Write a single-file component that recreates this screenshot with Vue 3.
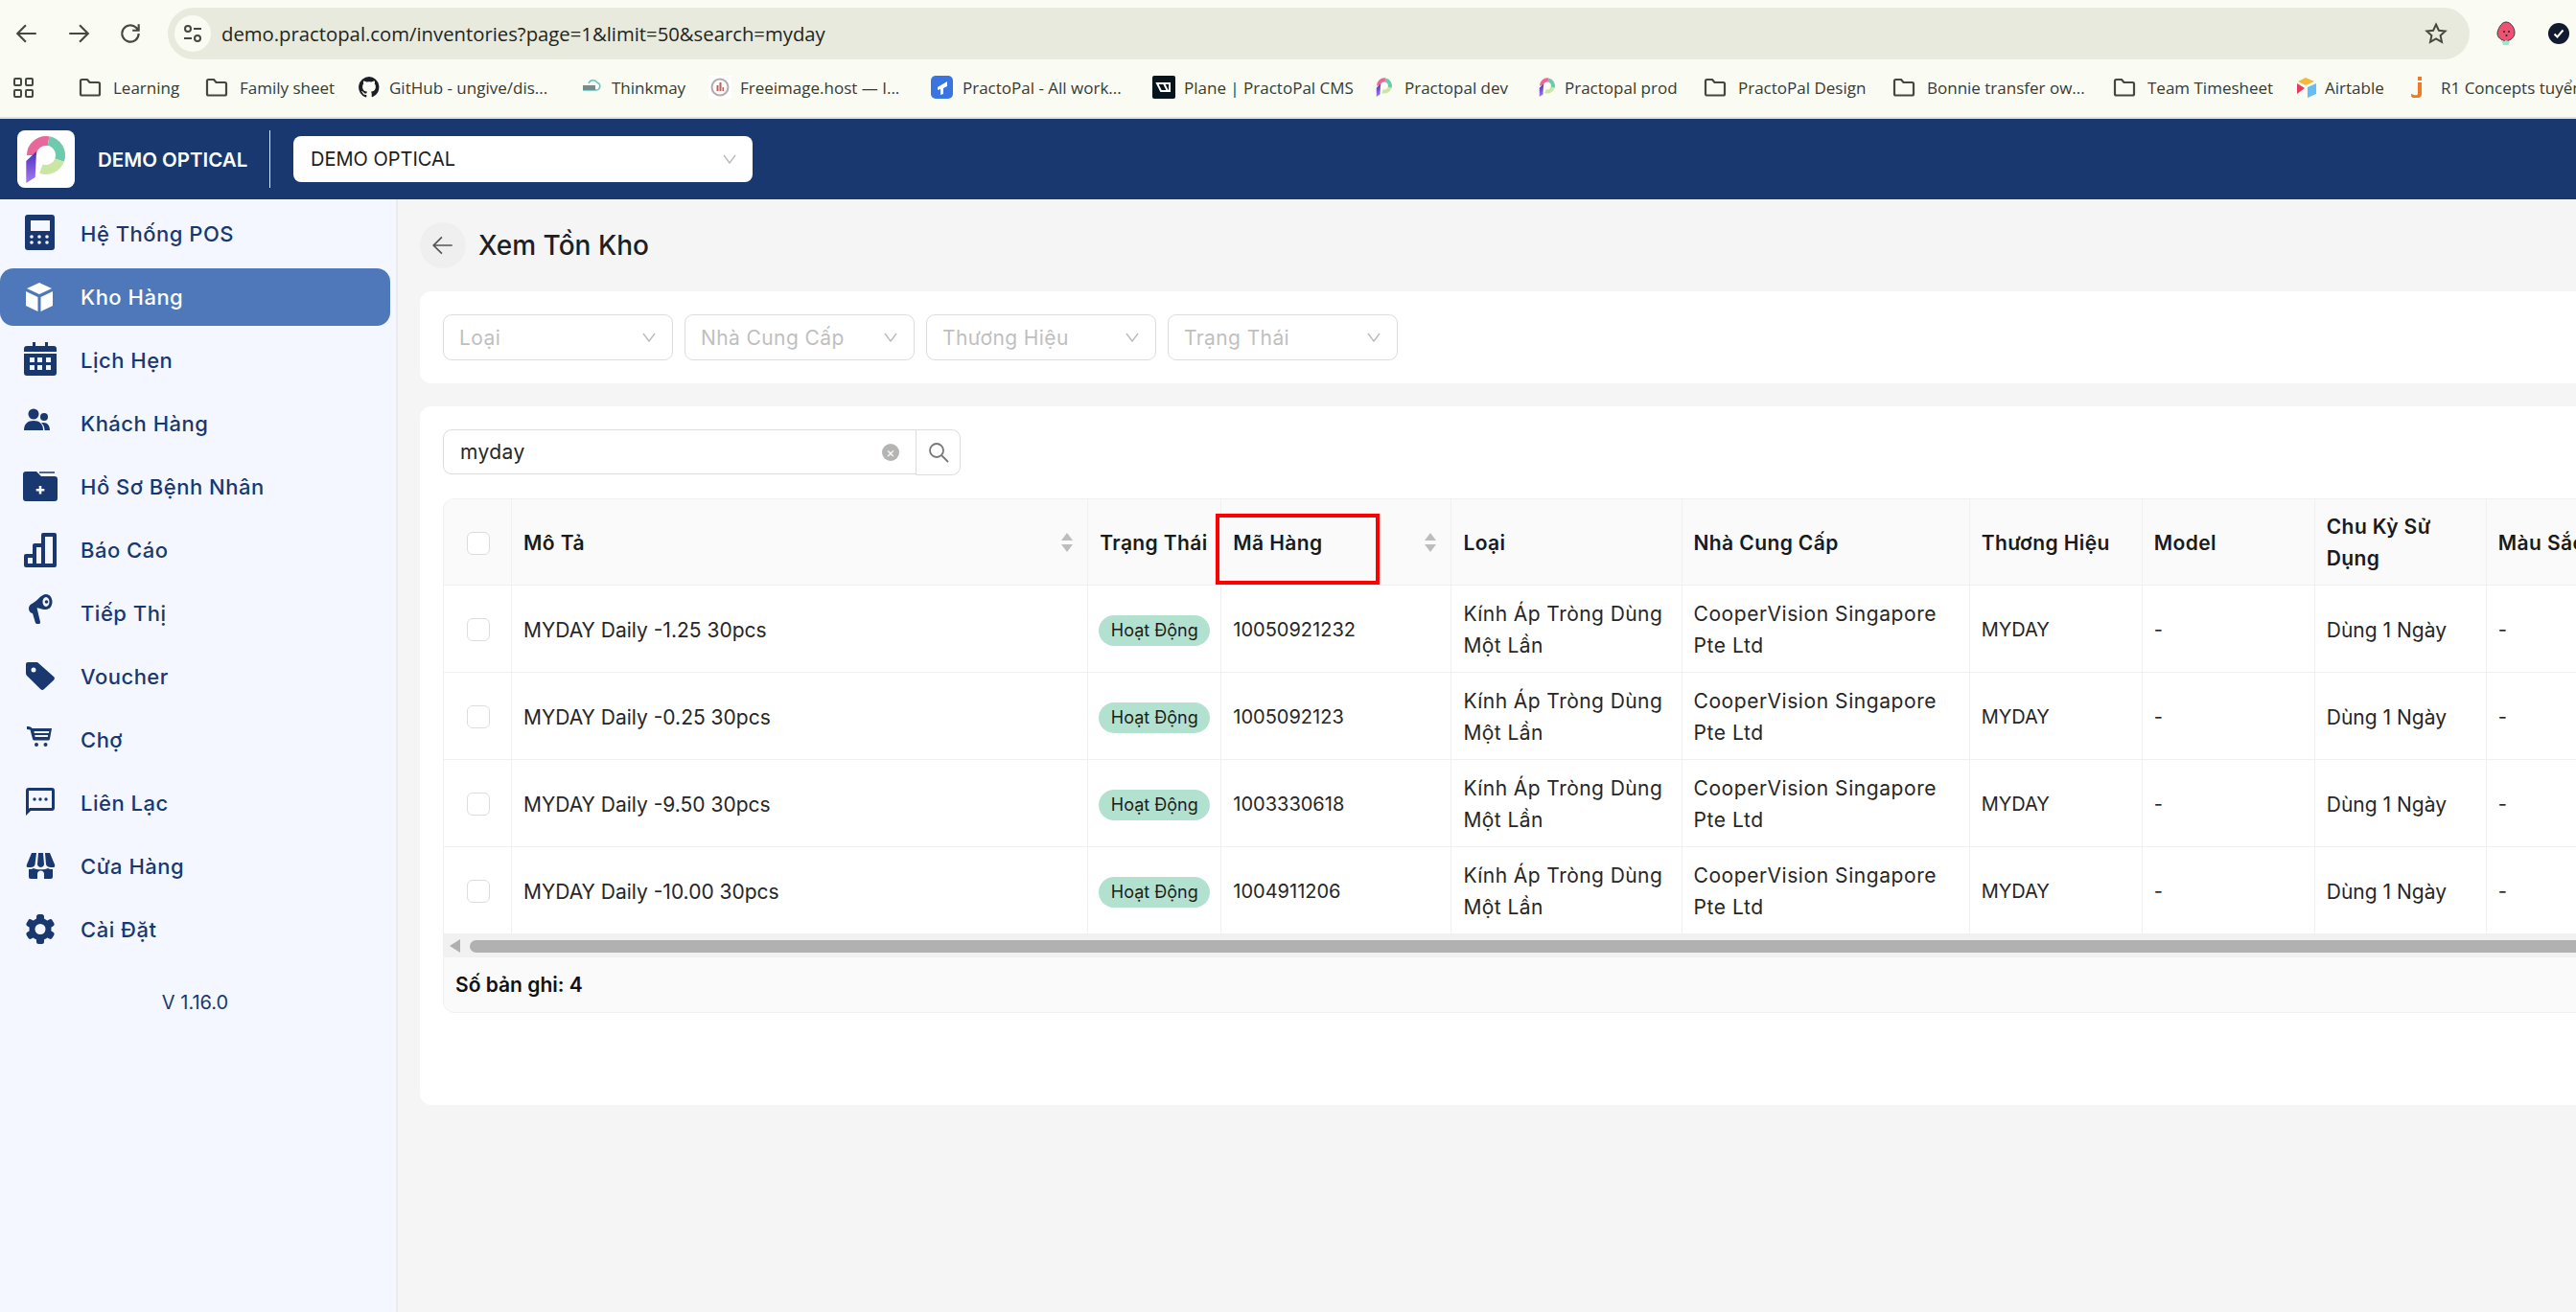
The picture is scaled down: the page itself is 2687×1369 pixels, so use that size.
<script setup>
const pLogo = `<path d="M15 26A15 15 0 0 1 32.6 11.2" fill="none" stroke="#e8689c" stroke-width="10"/>
<path d="M32.6 11.2A15 15 0 0 1 44.1 31.1" fill="none" stroke="#6fc9ad" stroke-width="10"/>
<path d="M44.1 31.1A15 15 0 0 1 24.9 40.1" fill="none" stroke="#c9e6a4" stroke-width="10"/>
<path d="M9.3 55 18.7 49 20 22 9.3 32Z" fill="url(#pstem)"/>
<defs><linearGradient id="pstem" x1="0" y1="0" x2="0" y2="1"><stop offset="0" stop-color="#4a2fc0"/><stop offset="1" stop-color="#a77bf0"/></linearGradient></defs>`

const folder = `<path d="M2 5.5A1.5 1.5 0 0 1 3.5 4H9l2.5 3h9A1.5 1.5 0 0 1 22 8.500V19a1.500 1.500 0 0 1-1.500 1.500h-17A1.500 1.500 0 0 1 2 19Z" fill="none" stroke="#45483f" stroke-width="2.200"/>`

const bookmarks = [
  { label: 'Learning', w: 68, gap: 12, icon: folder },
  { label: 'Family sheet', w: 95, gap: 12, icon: folder },
  { label: 'GitHub - ungive/dis...', w: 171, gap: 9, icon: `<path fill="#1b1f23" fill-rule="evenodd" d="M12 1a11 11 0 0 0-3.500 21.400c.6.1.8-.2.8-.5v-2c-3.100.7-3.700-1.400-3.700-1.400-.5-1.300-1.200-1.600-1.200-1.600-1-.7.1-.7.1-.7 1.100.1 1.700 1.100 1.700 1.100 1 1.700 2.600 1.200 3.200.9.1-.7.4-1.200.7-1.500-2.400-.3-5-1.200-5-5.400 0-1.200.4-2.200 1.100-2.900-.1-.3-.5-1.400.1-2.900 0 0 .9-.3 3 1.100a10.500 10.500 0 0 1 5.400 0c2.100-1.400 3-1.100 3-1.100.6 1.500.2 2.600.1 2.900.7.7 1.100 1.700 1.100 2.900 0 4.200-2.600 5.100-5 5.400.4.300.8 1 .8 2v3c0 .3.2.6.8.5A11 11 0 0 0 12 1Z"/>` },
  { label: 'Thinkmay', w: 73, gap: 9, icon: `<path d="M3 15h14a4 4 0 0 0 1-7.800A5 5 0 0 0 9 8" fill="none" stroke="#63c4c0" stroke-width="1.500"/><rect x="3" y="10" width="13" height="5" fill="#7a8a8a"/>` },
  { label: 'Freeimage.host — I...', w: 170, gap: 9, icon: `<rect width="24" height="24" fill="#fff"/><circle cx="12" cy="12" r="8.500" fill="none" stroke="#b9a8a8" stroke-width="2"/><path d="M8.500 16V10h2v6Zm3 0V7h2v9Zm3 0v-4h1.500v4Z" fill="#c0605c"/>` },
  { label: 'PractoPal - All work...', w: 170, gap: 10, icon: `<rect x="1" width="23" height="24" rx="5" fill="#3a74e0"/><path d="M8 12 18 6v5l-4 2v6l-3 1v-6l-3 1Z" fill="#fff"/>` },
  { label: 'Plane | PractoPal CMS', w: 169, gap: 9, icon: `<rect width="24" height="24" rx="2" fill="#07141c"/><path d="M5 8h7l4 8H9Zm7 0h6v8h-2" fill="none" stroke="#fff" stroke-width="2"/>` },
  { label: 'Practopal dev', w: 109, gap: 9, icon: `<svg x="0" y="0" width="24" height="24" viewBox="0 0 60 60">${pLogo}</svg>` },
  { label: 'Practopal prod', w: 117, gap: 6, icon: `<svg x="0" y="0" width="24" height="24" viewBox="0 0 60 60">${pLogo}</svg>` },
  { label: 'PractoPal Design', w: 133, gap: 12, icon: folder },
  { label: 'Bonnie transfer ow...', w: 166, gap: 12, icon: folder },
  { label: 'Team Timesheet', w: 126, gap: 12, icon: folder },
  { label: 'Airtable', w: 62, gap: 7, icon: `<path d="M11 2 20 6l-9 4-8-4Z" fill="#f4b93a"/><path d="M13 12l9-4v11l-9 4Z" fill="#66bdf5"/><path d="M2 8l8 5-8 6Z" fill="#e8395f"/>` },
  { label: 'R1 Concepts tuyển dụng', w: 240, gap: 7, icon: `<path d="M7 1h4v4H7Zm0 6h4v12a4 4 0 0 1-4 4H2a3 3 0 0 1-2-4l3 1c1 .5 4 .5 4-1Z" fill="#ee7a27"/>` },
]

const navItems = [
  { label: 'Hệ Thống POS', icon: `<path fill-rule="evenodd" d="M8 0h25a3 3 0 0 1 3 3v31a3 3 0 0 1-3 3H8a3 3 0 0 1-3-3V3a3 3 0 0 1 3-3Zm3 6v11h20V6Z"/><g fill="#f4f7ff"><circle cx="12" cy="23" r="1.800"/><circle cx="20" cy="23" r="1.800"/><circle cx="28" cy="23" r="1.800"/><circle cx="12" cy="29" r="1.800"/><circle cx="20" cy="29" r="1.800"/><circle cx="28" cy="29" r="1.800"/></g>` },
  { label: 'Kho Hàng', active: true, icon: `<path d="M20 5 33 11 20 17 7 11ZM6 14l12.500 6v15L6 29Zm28 0-12.500 6v15L34 29Z" fill="#fff"/>` },
  { label: 'Lịch Hẹn', icon: `<path fill-rule="evenodd" d="M13 1h3v4h10V1h3v4h6a3 3 0 0 1 3 3v3H4V8a3 3 0 0 1 3-3h6ZM4 13h34v20a3 3 0 0 1-3 3H7a3 3 0 0 1-3-3Zm6 4v5h5v-5Zm8 0v5h5v-5Zm9 0v5h5v-5Zm-17 8v5h5v-5Zm8 0v5h5v-5Zm9 0v5h5v-5Z"/>` },
  { label: 'Khách Hàng', icon: `<circle cx="14" cy="10" r="5.500"/><path d="M4 27c0-7 4-10 10-10s10 3 10 10Z"/><circle cx="25" cy="13" r="4"/><path d="M25.500 27H31c0-5-2.500-8-6.500-8a9 9 0 0 0-2.500.3c2.400 1.900 3.500 4.500 3.500 7.700Z"/>` },
  { label: 'Hồ Sơ Bệnh Nhân', icon: `<path fill-rule="evenodd" d="M6 4h11l5 5h14a3 3 0 0 1 3 3v20a3 3 0 0 1-3 3H6a3 3 0 0 1-3-3V7a3 3 0 0 1 3-3Zm13.700 15v3h-3v2.500h3v3h2.600v-3h3V22h-3v-3Z"/><path d="M20 5h16" stroke="#1a3870" stroke-width="1.500"/>` },
  { label: 'Báo Cáo', icon: `<path d="M6 36V26h9V15h9V4h12v32Zm9 0V26m9 10V15" fill="none" stroke="#1a3870" stroke-width="4" stroke-linejoin="round"/>` },
  { label: 'Tiếp Thị', icon: `<path fill-rule="evenodd" d="M27 0c3.700 0 6.500 3.600 6.500 8S30.700 16 27 16c-3 0-6-1-9.500-1.800L21 29c.2 1-.4 2-1.500 2h-2c-.8 0-1.400-.5-1.600-1.200L13 20c-2.500-.5-4-2.300-4-5 0-2.500 1.400-4.300 4-5.500C18 7 22 0 27 0Zm0 3c-1.900 0-3.500 2.200-3.500 5s1.600 5 3.500 5 3.500-2.200 3.500-5-1.600-5-3.500-5Z"/><circle cx="27.500" cy="8" r="1.800"/>` },
  { label: 'Voucher', icon: `<path fill-rule="evenodd" d="M8 5h10l17 15c1.200 1.100 1.200 2.500 0 3.700L25 33c-1.200 1.200-2.600 1.200-3.800 0L7 19c-.7-.7-1-1.500-1-2.500V7a2 2 0 0 1 2-2Zm6 5.500a2.500 2.500 0 1 0 0 5 2.500 2.500 0 0 0 0-5Z"/>` },
  { label: 'Chợ', icon: `<path fill-rule="evenodd" d="M7 6c3 0 4.500.5 5.500 2H33l-2 11c-.2 1-1 1.500-2 1.500H15c-1 0-1.800-.5-2-1.500L10.500 9.500 7 9Zm7.500 5 .3 2H30l.3-2Zm.8 4 .3 2h13.200l.3-2Z"/><circle cx="17" cy="25" r="2"/><circle cx="26.500" cy="25" r="2"/>` },
  { label: 'Liên Lạc', icon: `<path fill-rule="evenodd" d="M9 4h24a3 3 0 0 1 3 3v18a3 3 0 0 1-3 3H11l-5 5V7a3 3 0 0 1 3-3Zm0 3v19l1-1h23V7Z"/><circle cx="15" cy="16" r="1.700"/><circle cx="21" cy="16" r="1.700"/><circle cx="27" cy="16" r="1.700"/>` },
  { label: 'Cửa Hàng', icon: `<path d="M12 6h5l-1.500 12c-.3 2-2 3-4.500 3H8c-1.500 0-1.500-1.500-1-3Zm7 0h5l1 12c0 2-2.500 3-3.500 3s-3.500-1-3.500-3Zm7 0h5l5 12c.5 1.500 0 3-1 3h-3c-2.500 0-4.500-1-5-3Z"/><path fill-rule="evenodd" d="M9 23c2 0 3.500 0 5-1 2 1 3.500 1.200 7.500 1.200s5.500-.2 7.500-1.200c1.500 1 3 1 5 1v8a2 2 0 0 1-2 2H11a2 2 0 0 1-2-2Zm9 10h7v-5c0-2-1.500-3.500-3.500-3.500S18 26 18 28Z"/>` },
  { label: 'Cài Đặt', icon: `<g><rect x="17" y="4" width="8" height="31" rx="2.500"/><rect x="17" y="4" width="8" height="31" rx="2.500" transform="rotate(60 21 19.500)"/><rect x="17" y="4" width="8" height="31" rx="2.500" transform="rotate(120 21 19.500)"/></g><circle cx="21" cy="19.500" r="11.500"/><circle cx="21" cy="19.500" r="5.500" fill="#f4f7ff"/>` },
]

const filters = ['Loại', 'Nhà Cung Cấp', 'Thương Hiệu', 'Trạng Thái']

const columns = [
  { key: 'desc', label: 'Mô Tả', width: 601, sort: true },
  { key: 'status', label: 'Trạng Thái', width: 139 },
  { key: 'code', label: 'Mã Hàng', width: 240, sort: true },
  { key: 'type', label: 'Loại', width: 240 },
  { key: 'supplier', label: 'Nhà Cung Cấp', width: 300 },
  { key: 'brand', label: 'Thương Hiệu', width: 180 },
  { key: 'model', label: 'Model', width: 180 },
  { key: 'cycle', label: 'Chu Kỳ Sử\nDụng', width: 179 },
  { key: 'color', label: 'Màu Sắc', width: 200 },
]

const rows = [
  ['MYDAY Daily -1.25 30pcs', '10050921232'],
  ['MYDAY Daily -0.25 30pcs', '1005092123'],
  ['MYDAY Daily -9.50 30pcs', '1003330618'],
  ['MYDAY Daily -10.00 30pcs', '1004911206'],
].map(([desc, code]) => ({
  desc,
  code,
  status: 'Hoạt Động',
  type: 'Kính Áp Tròng Dùng\nMột Lần',
  supplier: 'CooperVision Singapore\nPte Ltd',
  brand: 'MYDAY',
  model: '-',
  cycle: 'Dùng 1 Ngày',
  color: '-',
}))
</script>

<template>
  <div class="page">
    <header class="browser">
      <div class="toolbar">
        <svg class="tb-icon" viewBox="0 0 24 24"><path d="M21 12H4m7-8-8 8 8 8" /></svg>
        <svg class="tb-icon" viewBox="0 0 24 24"><path d="M3 12h17m-7-8 8 8-8 8" /></svg>
        <svg class="tb-icon" viewBox="0 0 24 24"><path d="M20 12a8 8 0 1 1-2.500-5.800L20 9m0-6v6h-6" /></svg>
        <div class="urlbar">
          <span class="site-btn">
            <svg viewBox="0 0 24 24" width="24" height="24" fill="none" stroke="#45483f" stroke-width="2">
              <circle cx="7" cy="7" r="3" /><path d="M13 7h8M3 17h8" /><circle cx="17" cy="17" r="3" />
            </svg>
          </span>
          <span class="url">demo.practopal.com/inventories?page=1&amp;limit=50&amp;search=myday</span>
          <svg class="star" viewBox="0 0 24 24" width="24" height="24">
            <path d="m12 2.500 2.900 6.200 6.700.8-5 4.600 1.400 6.700-6-3.400-6 3.400 1.400-6.700-5-4.600 6.700-.8Z" />
          </svg>
        </div>
        <svg class="ext berry" viewBox="0 0 22 26" width="22" height="26">
          <path d="M11 1c5 0 9 6 9 11s-4 8-9 9C6 20 2 17 2 13S6 1 11 1Z" fill="#ee5272" stroke="#3a3a3a" stroke-width="1" />
          <path d="M6 20l3 1 2-1 3 1 1 1-2 3H8Z" fill="#a5e4cc" />
          <circle cx="9" cy="11" r="1" fill="#3a1a20" /><circle cx="14" cy="11" r="1" fill="#3a1a20" /><circle cx="11.500" cy="15" r="1" fill="#3a1a20" />
        </svg>
        <svg class="ext check" viewBox="0 0 22 22" width="22" height="22">
          <circle cx="11" cy="11" r="11" fill="#111a2e" />
          <path d="m6.500 11.500 3 3 6-7" fill="none" stroke="#fff" stroke-width="2" />
        </svg>
      </div>
      <nav class="bookmarks">
        <span class="apps"><i v-for="n in 4" :key="n"></i></span>
        <span class="bm-sep"></span>
        <span v-for="b in bookmarks" :key="b.label" class="bm" :style="{ gap: b.gap + 'px' }">
          <svg class="bm-icon" viewBox="0 0 24 24" v-html="b.icon"></svg>
          <span class="bm-label" :style="{ width: b.w + 'px' }">{{ b.label }}</span>
        </span>
      </nav>
    </header>

    <div class="appbar">
      <span class="logo"><svg viewBox="0 0 60 60" width="60" height="60" v-html="pLogo"></svg></span>
      <span class="store-name">DEMO OPTICAL</span>
      <span class="appbar-sep"></span>
      <div class="store-select">
        <span>DEMO OPTICAL</span>
        <svg class="chev" viewBox="0 0 14 10"><path d="M1 1l6 8 6-8" /></svg>
      </div>
    </div>

    <div class="layout">
      <aside class="sidebar">
        <a v-for="item in navItems" :key="item.label" class="nav-item" :class="{ active: item.active }">
          <svg class="nav-icon" viewBox="0 0 40 40" v-html="item.icon"></svg>
          <span>{{ item.label }}</span>
        </a>
        <div class="version">V 1.16.0</div>
      </aside>

      <main class="content">
        <div class="title-row">
          <span class="back">
            <svg viewBox="0 0 24 24" width="26" height="26"><path d="M21 12H4m7-8-8 8 8 8" /></svg>
          </span>
          <h1>Xem Tồn Kho</h1>
        </div>

        <section class="card filters">
          <div v-for="f in filters" :key="f" class="filter">
            <span>{{ f }}</span>
            <svg class="chev" viewBox="0 0 14 10"><path d="M1 1l6 8 6-8" /></svg>
          </div>
        </section>

        <section class="card list">
          <div class="search">
            <div class="search-input">
              <span>myday</span>
              <span class="clear">×</span>
            </div>
            <button class="search-btn">
              <svg viewBox="0 0 24 24" width="24" height="24"><circle cx="10" cy="10" r="7" /><path d="m15 15 7 7" /></svg>
            </button>
          </div>

          <div class="table-wrap">
            <table>
              <colgroup>
                <col class="col-check" />
                <col v-for="c in columns" :key="c.key" :style="{ width: c.width + 'px' }" />
              </colgroup>
              <thead>
                <tr>
                  <th class="check-cell"><span class="checkbox"></span></th>
                  <th v-for="c in columns" :key="c.key">
                    <div class="th-inner">
                      <span class="th-label">{{ c.label }}</span>
                      <svg v-if="c.sort" class="sort" viewBox="0 0 14 20" width="14" height="20">
                        <path d="M7 0l6 8H1Z" /><path d="M7 20l6-8H1Z" />
                      </svg>
                    </div>
                  </th>
                </tr>
              </thead>
              <tbody>
                <tr v-for="row in rows" :key="row.code">
                  <td class="check-cell"><span class="checkbox"></span></td>
                  <td v-for="c in columns" :key="c.key">
                    <span v-if="c.key === 'status'" class="badge">{{ row.status }}</span>
                    <span v-else class="cell" :class="'cell-' + c.key">{{ row[c.key] }}</span>
                  </td>
                </tr>
              </tbody>
            </table>
            <div class="scrollbar">
              <span class="arrow"></span>
              <span class="thumb"></span>
            </div>
            <div class="table-footer">Số bản ghi: 4</div>
            <div class="highlight"></div>
          </div>
        </section>
      </main>
    </div>
  </div>
</template>

<style>
html, body {
  margin: 0;
  overflow: hidden;
}
</style>

<style scoped>
.page {
  width: 2687px;
  height: 1369px;
  overflow: hidden;
  display: flex;
  flex-direction: column;
  font-family: Inter, "Noto Sans", sans-serif;
  color: #262626;
  background: #f5f5f5;
}

/* browser chrome */
.browser {
  flex: none;
  height: 122px;
  background: #fafbf2;
  border-bottom: 2px solid #dfe0da;
  font-family: "Open Sans", "Noto Sans", sans-serif;
}

.toolbar {
  height: 70px;
  display: flex;
  align-items: center;
  padding: 0 0 0 15px;
}

.tb-icon {
  width: 26px;
  height: 26px;
  margin-right: 28px;
  fill: none;
  stroke: #45483f;
  stroke-width: 2;
}

.tb-icon:nth-child(3) {
  margin-right: 26px;
}

.urlbar {
  width: 2401px;
  height: 54px;
  border-radius: 27px;
  background: #e7eadc;
  display: flex;
  align-items: center;
  padding-left: 7px;
  box-sizing: border-box;
}

.site-btn {
  width: 38px;
  height: 38px;
  border-radius: 50%;
  background: #fafbf2;
  display: flex;
  align-items: center;
  justify-content: center;
}

.url {
  margin-left: 11px;
  font-size: 20.300px;
  color: #21251d;
  white-space: nowrap;
}

.star {
  margin-left: auto;
  margin-right: 23px;
  fill: none;
  stroke: #45483f;
  stroke-width: 2;
}

.berry {
  margin-left: 27px;
}

.check {
  margin-left: 33px;
}

.bookmarks {
  height: 42px;
  display: flex;
  align-items: center;
  padding-left: 14px;
  gap: 28px;
  overflow: hidden;
}

.apps {
  width: 20px;
  display: grid;
  grid-template-columns: 9px 9px;
  gap: 3px;
  margin-right: -5px;
}

.apps i {
  height: 9px;
  box-sizing: border-box;
  border: 2px solid #45483f;
  border-radius: 2px;
}

.bm-sep {
  width: 2px;
  height: 24px;
  background: #c7e8a8;
  margin-right: -3px;
}

.bm {
  display: flex;
  align-items: center;
  flex: none;
}

.bm-icon {
  width: 24px;
  height: 24px;
  flex: none;
}

.bm-label {
  font-size: 17px;
  color: #363a32;
  white-space: nowrap;
}

/* app header */
.appbar {
  flex: none;
  height: 84px;
  background: #1a3870;
  display: flex;
  align-items: center;
  padding-left: 18px;
}

.logo {
  width: 60px;
  height: 60px;
  border-radius: 8px;
  background: #fff;
  display: block;
}

.logo svg {
  display: block;
}

.store-name {
  margin-left: 24px;
  width: 179px;
  font-size: 20.500px;
  font-weight: 600;
  color: #fff;
  white-space: nowrap;
}

.appbar-sep {
  width: 1px;
  height: 60px;
  background: #e8e8e8;
}

.store-select {
  margin-left: 24px;
  width: 479px;
  height: 48px;
  box-sizing: border-box;
  background: #fff;
  border-radius: 8px;
  display: flex;
  align-items: center;
  justify-content: space-between;
  padding: 0 17px 0 18px;
  font-size: 20px;
  color: #1c1c1c;
}

.chev {
  width: 14px;
  height: 10px;
  fill: none;
  stroke: #bdbdbd;
  stroke-width: 1.500;
}

.layout {
  flex: 1;
  min-height: 0;
  display: flex;
}

/* sidebar */
.sidebar {
  flex: none;
  width: 407px;
  background: #f4f7ff;
  border-right: 2px solid #e9e9ee;
  padding: 6px 6px 0 0;
  display: flex;
  flex-direction: column;
  gap: 6px;
}

.nav-item {
  height: 60px;
  display: flex;
  align-items: center;
  gap: 23px;
  padding-left: 21px;
  border-radius: 0 14px 14px 0;
  font-size: 22px;
  font-weight: 500;
  letter-spacing: 0.500px;
  color: #1a3870;
}

.nav-item.active {
  background: #4e78ba;
  color: #fff;
  border-radius: 14px;
}

.nav-icon {
  width: 40px;
  height: 40px;
  flex: none;
  fill: #1a3870;
}

.version {
  margin-top: 28px;
  text-align: center;
  font-size: 20px;
  color: #1a3870;
}

/* main area */
.content {
  flex: 1;
  min-width: 0;
  padding: 24px 0 0 23px;
  display: flex;
  flex-direction: column;
  gap: 24px;
}

.title-row {
  display: flex;
  align-items: center;
  gap: 13px;
  height: 48px;
}

.back {
  width: 48px;
  height: 48px;
  border-radius: 50%;
  background: #efefef;
  display: flex;
  align-items: center;
  justify-content: center;
}

.back svg {
  fill: none;
  stroke: #555;
  stroke-width: 1.600;
}

h1 {
  margin: 0;
  font-size: 28px;
  font-weight: 500;
  color: #1f1f1f;
}

.card {
  background: #fff;
  border-radius: 12px 0 0 12px;
  padding: 24px 0 24px 24px;
}

.filters {
  display: flex;
  gap: 12px;
  height: 48px;
}

.filter {
  width: 240px;
  height: 48px;
  box-sizing: border-box;
  border: 1.500px solid #dcdcdc;
  border-radius: 9px;
  display: flex;
  align-items: center;
  justify-content: space-between;
  padding: 0 17px 0 16px;
  font-size: 21px;
  letter-spacing: 0.400px;
  color: #bfbfbf;
}

.list {
  padding-bottom: 96px;
  display: flex;
  flex-direction: column;
  gap: 24px;
  min-width: 0;
}

.search {
  display: flex;
  height: 48px;
}

.search-input {
  width: 494px;
  height: 47px;
  box-sizing: border-box;
  border: 1.500px solid #dcdcdc;
  border-radius: 9px 0 0 9px;
  display: flex;
  align-items: center;
  justify-content: space-between;
  padding: 0 17px;
  font-size: 21px;
  letter-spacing: 0.400px;
  color: #262626;
}

.clear {
  width: 18px;
  height: 18px;
  border-radius: 50%;
  background: #b4b4b4;
  color: #fff;
  font-size: 14px;
  line-height: 17px;
  letter-spacing: 0;
  text-align: center;
}

.search-btn {
  width: 47px;
  height: 48px;
  margin-left: -1px;
  padding: 0;
  background: #fff;
  border: 1.500px solid #dcdcdc;
  border-radius: 0 9px 9px 0;
  display: flex;
  align-items: center;
  justify-content: center;
}

.search-btn svg {
  fill: none;
  stroke: #777;
  stroke-width: 1.800;
}

/* table */
.table-wrap {
  position: relative;
  overflow: hidden;
  border-top: 1px solid #f0f0f0;
  border-left: 1px solid #f0f0f0;
  border-radius: 12px 0 0 12px;
  box-sizing: border-box;
}

table {
  width: 2331px;
  table-layout: fixed;
  border-collapse: separate;
  border-spacing: 0;
  font-size: 20px;
}

.col-check {
  width: 71px;
}

th,
td {
  padding: 0 12px;
  box-sizing: border-box;
  border-bottom: 1.500px solid #f0f0f0;
  border-right: 1px solid #f0f0f0;
  text-align: left;
  height: 91px;
  vertical-align: middle;
}

th {
  background: #fafafa;
  font-size: 21px;
  font-weight: 600;
  letter-spacing: 0.400px;
  color: #1a1a1a;
  height: 90px;
}

.th-inner {
  display: flex;
  align-items: center;
  justify-content: space-between;
  padding-right: 2px;
  line-height: 33px;
}

.th-label {
  white-space: pre;
  line-height: 33px;
  display: block;
  padding-top: 1px;
}

.cell {
  white-space: pre-line;
  line-height: 33px;
  display: block;
  padding-top: 2px;
}

.cell-desc,
.cell-cycle {
  font-size: 21px;
}

.cell-type {
  font-size: 21px;
  letter-spacing: 0.430px;
}

.cell-supplier {
  font-size: 21px;
  letter-spacing: 0.570px;
}

.sort {
  flex: none;
  fill: #bdbdbd;
}

.check-cell {
  text-align: center;
  padding: 0 0 0 1px;
}

.checkbox {
  display: inline-block;
  vertical-align: middle;
  width: 24px;
  height: 24px;
  box-sizing: border-box;
  background: #fff;
  border: 1.500px solid #dcdcdc;
  border-radius: 6px;
}

.badge {
  display: block;
  height: 32px;
  margin: 3px -1px 0;
  border-radius: 16px;
  background: #b2e2cf;
  text-align: center;
  font-size: 18px;
  line-height: 32px;
  color: #1c1c1c;
  white-space: nowrap;
}

.scrollbar {
  height: 24px;
  background: #f1f1f1;
  display: flex;
  align-items: center;
  padding-left: 6px;
  gap: 10px;
}

.arrow {
  width: 0;
  height: 0;
  border-top: 7px solid transparent;
  border-bottom: 7px solid transparent;
  border-right: 11px solid #b0b0b0;
}

.thumb {
  flex: 1;
  height: 13px;
  border-radius: 7px 0 0 7px;
  background: #b1b1b1;
}

.table-footer {
  height: 58px;
  box-sizing: border-box;
  background: #fafafa;
  border-bottom: 1.500px solid #f0f0f0;
  border-radius: 0 0 0 12px;
  padding-left: 12px;
  display: flex;
  align-items: center;
  font-size: 21px;
  font-weight: 600;
  color: #111;
}

/* red annotation over the header cell */
.highlight {
  position: absolute;
  left: 805px;
  top: 15px;
  width: 171px;
  height: 74px;
  box-sizing: border-box;
  border: 4px solid #f00;
}
</style>
